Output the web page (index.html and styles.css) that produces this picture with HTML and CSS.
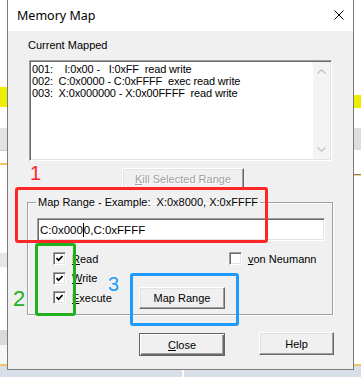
FILE: index.html
```html
<!DOCTYPE html>
<html lang="en">
<head>
    <meta charset="UTF-8">
    <title>Memory Map</title>
    <link rel="stylesheet" href="styles.css">
</head>
<body>

<div class="dialog">
    <div class="titlebar">
        <span class="title">Memory Map</span>
        <svg class="close-x" width="10" height="10" viewBox="0 0 10 10">
            <path d="M0.5 0.5 L9.5 9.5 M9.5 0.5 L0.5 9.5" stroke="#000" stroke-width="1" fill="none"/>
        </svg>
    </div>

    <div class="dialog-body">
        <div class="caption">Current Mapped</div>

        <div class="listbox sunken">
            <div class="list-lines">
                <div class="list-line">001:    I:0x00 -   I:0xFF  read write</div>
                <div class="list-line">002:  C:0x0000 - C:0xFFFF  exec read write</div>
                <div class="list-line">003:  X:0x000000 - X:0x00FFFF  read write</div>
            </div>
            <div class="scrollbar">
                <svg width="9" height="5" viewBox="0 0 9 5"><path d="M0.5 4.5 L4.5 0.8 L8.5 4.5" stroke="#c2c2c2" stroke-width="1.3" fill="none"/></svg>
                <svg width="9" height="5" viewBox="0 0 9 5"><path d="M0.5 0.5 L4.5 4.2 L8.5 0.5" stroke="#c2c2c2" stroke-width="1.3" fill="none"/></svg>
            </div>
        </div>

        <button class="btn btn-kill" disabled><u>K</u>ill Selected Range</button>

        <fieldset class="group">
            <legend>Map Range - Example:&nbsp; X:0x8000, X:0xFFFF</legend>
            <div class="edit sunken">C:0x000<span class="caret"></span>0,C:0xFFFF</div>

            <div class="options">
                <div class="checks">
                    <div class="check-row">
                        <span class="box sunken"><svg width="7" height="7" viewBox="0 0 7 7"><path d="M0.5 3 L2.6 5.4 L6.5 1" stroke="#000" stroke-width="1.6" fill="none"/></svg></span>
                        <span><u>R</u>ead</span>
                    </div>
                    <div class="check-row">
                        <span class="box sunken"><svg width="7" height="7" viewBox="0 0 7 7"><path d="M0.5 3 L2.6 5.4 L6.5 1" stroke="#000" stroke-width="1.6" fill="none"/></svg></span>
                        <span><u>W</u>rite</span>
                    </div>
                    <div class="check-row">
                        <span class="box sunken"><svg width="7" height="7" viewBox="0 0 7 7"><path d="M0.5 3 L2.6 5.4 L6.5 1" stroke="#000" stroke-width="1.6" fill="none"/></svg></span>
                        <span><u>E</u>xecute</span>
                    </div>
                </div>
                <div class="side">
                    <div class="check-row vn-row">
                        <span class="box sunken"></span>
                        <span><u>v</u>on Neumann</span>
                    </div>
                    <button class="btn btn-map">Map Range</button>
                </div>
            </div>
        </fieldset>

        <div class="footer">
            <button class="btn btn-default btn-close"><u>C</u>lose</button>
            <button class="btn btn-help">Help</button>
        </div>
    </div>
</div>

<!-- annotation marks drawn over the screenshot -->
<div class="mark mark-red"></div>
<div class="mark mark-green"></div>
<div class="mark mark-blue"></div>
<span class="num num-1">1</span>
<span class="num num-2">2</span>
<span class="num num-3">3</span>

</body>
</html>
```

FILE: styles.css
```css
body {
    margin: 0;
    position: relative;
    height: 377px;
    overflow: hidden;
    font-family: 'Liberation Sans', Arial, sans-serif;
    font-size: 11px;
    color: #000;
    /* editor window peeking out behind the dialog */
    background:
        linear-gradient(to bottom, #fff 0 87px, #eded00 87px 107px, #fff 107px 128px, #e3e3e3 128px 150px, #c8c8c8 150px 151px, #fff 151px 163px, #efc46a 163px 165px, #fff 165px 253px, #e6e6e6 253px 267px, #fff 267px 330px, #dadada 330px 345px, #f7f7f7 345px 364px, #efc46a 364px 366px, transparent 366px) 0 0 / 7px 100% no-repeat,
        linear-gradient(to bottom, #fff 0 95px, #eded00 95px 108px, #fff 108px 128px, #dedede 128px 150px, #fff 150px 174px, #8a7a5a 174px 175px, #f3cf80 175px 176px, #fff 176px 364px, #efc46a 364px 366px, transparent 366px) 100% 0 / 8px 100% no-repeat,
        linear-gradient(to right, transparent 182px, #fff 182px 184px, transparent 184px),
        #d9dfe8;
}

.dialog {
    margin-left: 7px;
    width: 347px;
    height: 370px;
    box-sizing: border-box;
    border: 1px solid #7a7a7a;
    border-top: 0;
    background-color: #f0f0f0;
}

.titlebar {
    height: 31px;
    background-color: #fff;
    display: flex;
    align-items: center;
    justify-content: space-between;
    padding: 0 9px 0 9px;
}

.title {
    font-family: 'Noto Sans', sans-serif;
    font-size: 12.5px;
    margin-top: -1px;
}

.close-x {
    margin-top: -1px;
}

.dialog-body {
    display: flex;
    flex-direction: column;
    align-items: flex-start;
}

.caption {
    margin: 8px 0 0 20px;
    line-height: 13px;
}

.sunken {
    box-sizing: border-box;
    border: 1px solid;
    border-color: #a0a0a0 #fff #fff #a0a0a0;
    box-shadow: inset 1px 1px #696969, inset -1px -1px #e3e3e3;
    background-color: #fff;
}

.listbox {
    margin: 8px 0 0 21px;
    width: 303px;
    height: 101px;
    display: flex;
}

.list-lines {
    flex: 1;
    padding: 2px 0 0 2px;
    line-height: 12px;
}

.list-line {
    white-space: pre;
    letter-spacing: -0.15px;
}

.scrollbar {
    width: 17px;
    margin: 1px 1px 1px 0;
    background-color: #f4f4f4;
    display: flex;
    flex-direction: column;
    justify-content: space-between;
    align-items: center;
    padding: 7px 0 7px 0;
    box-sizing: border-box;
}

.btn {
    font-family: inherit;
    font-size: 11px;
    color: #000;
    background-color: #f0f0f0;
    border: 1px solid;
    border-color: #fff #696969 #696969 #fff;
    box-shadow: inset -1px -1px #a0a0a0, inset 1px 1px #e3e3e3;
    padding: 0;
    box-sizing: border-box;
}

.btn-kill {
    margin: 7px 0 0 114px;
    width: 122px;
    height: 22px;
    color: #a0a0a0;
    text-shadow: 1px 1px #fff;
}

.group {
    margin: 6px 0 0 19px;
    width: 306px;
    box-sizing: border-box;
    padding: 0 0 5px 0;
    min-width: 0;
    border: 1px solid #a0a0a0;
    box-shadow: 1px 1px 0 #fff, inset 1px 1px 0 #fff;
}

.group legend {
    margin-left: 8px;
    padding: 0 2px;
    line-height: 13px;
}

.edit {
    margin: 9px 0 0 9px;
    width: 288px;
    height: 23px;
    padding-left: 2px;
    display: flex;
    align-items: center;
    font-size: 11.5px;
}

.caret {
    display: inline-block;
    width: 1px;
    height: 14px;
    background-color: #000;
}

.options {
    display: flex;
    align-items: flex-start;
    margin: 11px 0 0 25px;
}

.checks {
    width: 86px;
    display: flex;
    flex-direction: column;
    gap: 6.5px;
}

.check-row {
    display: flex;
    align-items: center;
    gap: 6px;
    height: 13px;
}

.box {
    width: 13px;
    height: 13px;
    display: flex;
    align-items: center;
    justify-content: center;
}

.side {
    display: flex;
    flex-direction: column;
    align-items: flex-start;
}

.vn-row {
    margin-left: 90px;
}

.btn-map {
    margin-top: 22px;
    width: 86px;
    height: 22px;
}

.footer {
    display: flex;
    align-items: flex-start;
    margin: 17px 0 0 131px;
}

.btn-default {
    border-color: #646464;
    box-shadow: inset 1px 1px #fff, inset -1px -1px #696969, inset -2px -2px #a0a0a0;
}

.btn-close {
    margin-top: 1px;
    width: 86px;
    height: 23px;
}

.btn-help {
    margin-left: 34px;
    width: 75px;
    height: 23px;
}

.mark {
    position: absolute;
    box-sizing: border-box;
    border-radius: 3px;
}

.mark-red {
    left: 15px;
    top: 187px;
    width: 253px;
    height: 56px;
    border: 3px solid #ff2626;
}

.mark-green {
    left: 35px;
    top: 243px;
    width: 41px;
    height: 73px;
    border: 3px solid #20b020;
}

.mark-blue {
    left: 130px;
    top: 273px;
    width: 109px;
    height: 53px;
    border: 3px solid #1e9bff;
}

.num {
    position: absolute;
    font-family: 'Liberation Sans', Arial, sans-serif;
    font-size: 20px;
    line-height: 1;
}

.num-1 {
    left: 30px;
    top: 163px;
    color: #ff2626;
}

.num-2 {
    left: 13px;
    top: 288px;
    font-size: 22px;
    color: #20b020;
}

.num-3 {
    left: 108px;
    top: 274px;
    color: #1e9bff;
}
```
